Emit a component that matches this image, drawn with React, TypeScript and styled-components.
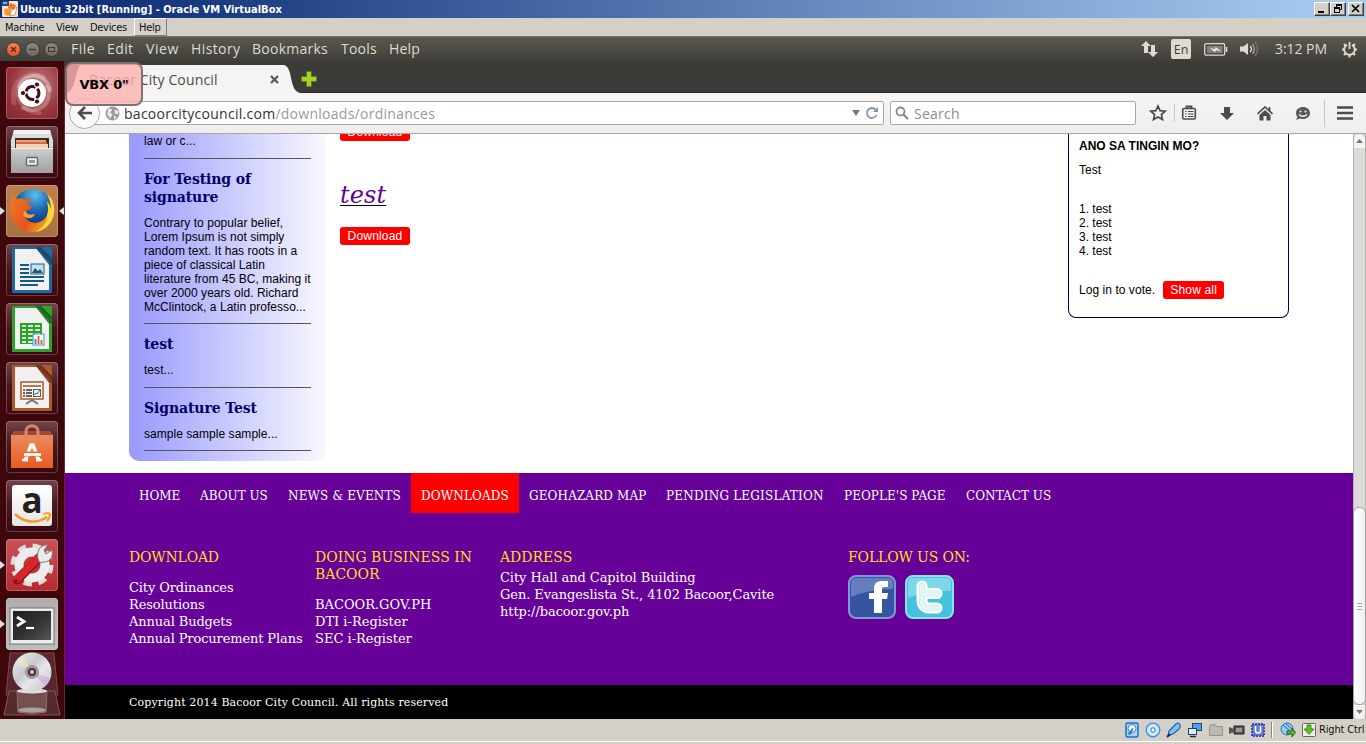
import React from "react";
import styled, { createGlobalStyle, css } from "styled-components";

const GlobalStyle = createGlobalStyle`
  * { box-sizing: border-box; }
  html, body { margin: 0; padding: 0; overflow: hidden; }
  svg { display: block; flex: none; }
`;

const Desktop = styled.div`
  width: 1366px;
  height: 744px;
  display: flex;
  flex-direction: column;
  background: #d4d0c8;
  font-family: "Open Sans", "Noto Sans", sans-serif;
`;

/* ---------- Virtual machine window ---------- */
const TitleBar = styled.header`
  height: 18px;
  display: flex;
  align-items: center;
  padding: 0 2px;
  background: linear-gradient(90deg, #0d2a72 0%, #1a3a80 15%, #a6caf0 97%);
`;
const TitleText = styled.div`
  flex: 1;
  padding-left: 2px;
  color: #fff;
  font: bold 11px/17px "DejaVu Sans Condensed", "DejaVu Sans", sans-serif;
  letter-spacing: 0;
  white-space: nowrap;
`;
const WinButton = styled.div<{ $gap?: boolean }>`
  width: 16px;
  height: 14px;
  margin-left: ${(p) => (p.$gap ? 2 : 0)}px;
  background: #d4d0c8;
  border: 1px solid;
  border-color: #fff #404040 #404040 #fff;
  box-shadow: inset -1px -1px #808080;
`;
const VmMenu = styled.nav`
  height: 18px;
  display: flex;
  align-items: center;
  background: #d4d0c8;
`;
const VmMenuItem = styled.div<{ $w: number; $raised?: boolean }>`
  width: ${(p) => p.$w}px;
  height: 18px;
  padding-left: 5px;
  color: #111;
  font: 11px/20px "DejaVu Sans Condensed", "DejaVu Sans", sans-serif;
  letter-spacing: -0.3px;
  white-space: nowrap;
  ${(p) =>
    p.$raised &&
    css`
      padding-left: 4px;
      border: 1px solid;
      border-color: #fff #808080 #808080 #fff;
      line-height: 18px;
    `}
`;

/* ---------- Ubuntu top panel ---------- */
const Panel = styled.div`
  height: 25px;
  display: flex;
  align-items: center;
  border-top: 1px solid #77756c;
  padding: 0 8px 0 6px;
  background: linear-gradient(#5b5950, #3f3e39);
  color: #dfdbd2;
`;
const WindowDots = styled.div`
  display: flex;
  gap: 4px;
  width: 65px;
`;
const Dot = styled.div<{ $close?: boolean }>`
  width: 15px;
  height: 15px;
  border-radius: 50%;
  border: 1px solid #3a3934;
  background: ${(p) => (p.$close ? "linear-gradient(#f4825e,#e4552a)" : "linear-gradient(#8b8980,#6c6a62)")};
`;
const PanelItem = styled.div<{ $w: number; $ls?: number }>`
  width: ${(p) => p.$w}px;
  font-size: 14px;
  line-height: 22px;
  letter-spacing: ${(p) => p.$ls ?? 0.2}px;
  white-space: nowrap;
`;
const Indicators = styled.div`
  margin-left: auto;
  display: flex;
  align-items: center;
`;
const Lang = styled.div`
  width: 20px;
  height: 20px;
  margin: 0 13px 0 13px;
  border-radius: 2px;
  background: #dfdbd2;
  color: #3f3e39;
  font-size: 12.5px;
  line-height: 21px;
  text-align: center;
`;
const Clock = styled.div`
  width: 53px;
  margin: 0 13px 0 14px;
  font-size: 14px;
  line-height: 22px;
  letter-spacing: -0.05px;
  white-space: nowrap;
`;

/* ---------- Workspace ---------- */
const Workspace = styled.div`
  height: 658px;
  display: flex;
`;
const Launcher = styled.aside`
  width: 65px;
  display: flex;
  flex-direction: column;
  align-items: center;
  gap: 7px;
  padding: 6px 0 0 0;
  border-right: 1px solid #6b2430;
  background: #3e070c;
`;
const Tile = styled.div<{ $bg: string }>`
  position: relative;
  flex: none;
  width: 52px;
  height: 52px;
  border-radius: 4px;
  background: ${(p) => p.$bg};
  box-shadow: inset 0 0 0 1px rgba(255, 255, 255, 0.22);
`;
const Pip = styled.i<{ $right?: boolean }>`
  position: absolute;
  top: 22px;
  ${(p) => (p.$right ? "right: -6px;" : "left: -6px;")}
  border: 4px solid transparent;
  ${(p) => (p.$right ? "border-right: 5px solid #ddd; border-left: 0;" : "border-left: 5px solid #ddd; border-right: 0;")}
`;
const DiscStack = styled.div`
  margin-top: -5px;
`;

/* ---------- Browser ---------- */
const Browser = styled.main`
  width: 1301px;
  display: flex;
  flex-direction: column;
`;
const TabStrip = styled.div`
  position: relative;
  height: 32px;
  display: flex;
  align-items: flex-end;
  background: #3c3b37;
  border-bottom: 1px solid #2b2a27;
`;
const Tab = styled.div`
  width: 203px;
  height: 28px;
  margin: 0 0 -1px;
  display: flex;
  align-items: center;
  padding: 0 5px 0 8px;
  background: #f5f4f2;
  color: #4c4c4c;
  font-size: 14px;
  letter-spacing: 0.14px;
  white-space: nowrap;
  z-index: 1;
`;
const TabClose = styled.svg`
  margin-left: auto;
`;
const TabEdge = styled.svg<{ $left?: boolean }>`
  margin: ${(p) => (p.$left ? "0 -1px -1px 0" : "0 0 -1px -1px")};
  z-index: 1;
`;
const NewTab = styled.svg`
  margin: 0 0 5px 0;
`;
const Badge = styled.div`
  position: absolute;
  z-index: 3;
  left: 0;
  top: 1px;
  width: 78px;
  height: 44px;
  border: 2px solid #82706f;
  border-radius: 8px;
  background: rgba(255, 176, 176, 0.8);
  color: #000;
  font: bold 13px/41px "DejaVu Sans", sans-serif;
  letter-spacing: -0.2px;
  text-align: center;
`;
const NavBar = styled.div`
  height: 41px;
  display: flex;
  align-items: center;
  padding: 0 0 0 4px;
  background: linear-gradient(#f6f5f3, #efeeec);
  border-bottom: 1px solid #a9a7a3;
`;
const Back = styled.div`
  width: 31px;
  height: 31px;
  margin-right: -13px;
  border: 1px solid #aaa;
  border-radius: 50%;
  background: #fafafa;
  display: grid;
  place-items: center;
  z-index: 1;
`;
const UrlField = styled.div`
  width: 797px;
  height: 24px;
  display: flex;
  align-items: center;
  padding: 0 4px 0 17px;
  border: 1px solid #aaa8a5;
  border-radius: 2px;
  background: #fff;
  color: #999;
  font-size: 14px;
  letter-spacing: 0.27px;
  white-space: nowrap;
  & b { font-weight: 400; color: #333; }
  & span { flex: 1; padding-left: 4px; }
`;
const SearchField = styled.div`
  width: 246px;
  height: 24px;
  margin-left: 6px;
  padding-left: 4px;
  display: flex;
  align-items: center;
  gap: 5px;
  border: 1px solid #aaa8a5;
  border-radius: 2px;
  background: #fff;
  color: #8c8c8c;
  font-size: 14px;
  letter-spacing: 0.25px;
`;
const Tools = styled.div`
  flex: 1;
  display: flex;
  align-items: center;
  padding-left: 6px;
`;
const ToolSlot = styled.div<{ $w: number }>`
  width: ${(p) => p.$w}px;
  display: grid;
  place-items: center;
`;
const Divider = styled.i<{ $tall?: boolean }>`
  width: 1px;
  height: ${(p) => (p.$tall ? 27 : 18)}px;
  margin-left: ${(p) => (p.$tall ? -3 : 0)}px;
  background: #c9c7c4;
`;
const Viewport = styled.div`
  height: 585px;
  display: flex;
  background: #fff;
`;
const ScrollTrack = styled.div`
  width: 13px;
  height: 585px;
  display: flex;
  flex-direction: column;
  justify-content: space-between;
  background: #dddbd8;
  border-left: 1px solid #b5b2ae;
  border-right: 1px solid #b5b2ae;
`;
const ScrollCap = styled.div<{ $down?: boolean }>`
  height: 14px;
  display: grid;
  place-items: center;
  background: #f4f3f2;
  border-radius: ${(p) => (p.$down ? "0 0 6px 6px" : "6px 6px 0 0")};
`;
const ScrollThumb = styled.div`
  height: 199px;
  margin: 359px -1px 0;
  display: grid;
  place-items: center;
  border: 1px solid #a5a29e;
  border-radius: 6px;
  background: linear-gradient(90deg, #fff, #f0efed);
`;

/* ---------- Web page ---------- */
const Page = styled.div`
  width: 1288px;
  display: flex;
  flex-direction: column;
`;
const Columns = styled.div`
  height: 339px;
  display: flex;
  padding-left: 64px;
  font: 12px/14px "Liberation Sans", sans-serif;
  color: #000;
`;
const News = styled.section`
  width: 197px;
  height: 327px;
  padding: 0 15px;
  border-radius: 0 0 10px 10px;
  background: linear-gradient(90deg, #9999ff, #f8f8ff);
`;
const Article = styled.article<{ $roomy?: boolean }>`
  width: 167px;
  padding-bottom: ${(p) => (p.$roomy ? 10 : 9)}px;
  border-bottom: 1px solid #555;
  letter-spacing: 0.04px;
  white-space: nowrap;
  & + & { padding-top: 11px; }
`;
const NewsTitle = styled.h3`
  margin: 0 0 10px;
  color: #000066;
  font: bold 14px/18px "DejaVu Serif", serif;
  letter-spacing: -0.1px;
`;
const Listing = styled.section`
  width: 728px;
  margin-left: 14px;
  display: flex;
  flex-direction: column;
  align-items: flex-start;
`;
const RedButton = styled.a<{ $w: number }>`
  display: block;
  width: ${(p) => p.$w}px;
  height: 18px;
  border-radius: 3px;
  background: #f00;
  color: #fff;
  font: 12px/18px "Liberation Sans", sans-serif;
  letter-spacing: 0.18px;
  text-align: center;
`;
const Clipped = styled.div`
  height: 7px;
  overflow: hidden;
  display: flex;
  align-items: flex-end;
`;
const ItemLink = styled.a`
  margin: 38px 0 16px;
  color: #660099;
  font: italic 24px/32px "DejaVu Serif", serif;
  border-bottom: 0;
  letter-spacing: 0.1px;
  text-decoration: underline;
  text-decoration-color: #000;
  text-decoration-thickness: 1px;
  text-underline-offset: 2px;
  text-decoration-skip-ink: none;
`;
const Poll = styled.section`
  width: 221px;
  height: 184px;
  padding: 5px 10px;
  border: 1px solid #000055;
  border-top: 0;
  border-radius: 0 0 8px 8px;
  & p { margin: 10px 0 0; }
  & ol { margin: 25px 0 23px; padding: 0; list-style: none; }
`;
const Vote = styled.div`
  display: flex;
  align-items: center;
  gap: 8px;
  line-height: 18px;
  letter-spacing: 0.05px;
`;
const Footer = styled.footer`
  height: 212px;
  padding-left: 64px;
  background: #660099;
  color: #fff;
  font: 13px/17px "DejaVu Serif", serif;
`;
const FooterNav = styled.nav`
  display: flex;
  height: 40px;
  margin-bottom: 36px;
`;
const FooterLink = styled.a<{ $w: number; $ls: number; $active?: boolean }>`
  width: ${(p) => p.$w}px;
  padding-left: 10px;
  font-size: 12px;
  line-height: 46px;
  letter-spacing: ${(p) => p.$ls}px;
  white-space: nowrap;
  background: ${(p) => (p.$active ? "#f00" : "none")};
`;
const FooterCols = styled.div`
  display: flex;
`;
const FooterCol = styled.div<{ $w: number; $ls?: number }>`
  width: ${(p) => p.$w}px;
  letter-spacing: ${(p) => p.$ls ?? 0}px;
  & div { white-space: nowrap; }
`;
const FooterTitle = styled.h4<{ $gap: number; $ls?: number }>`
  margin: 0 0 ${(p) => p.$gap}px;
  color: #ffdd1c;
  font: 14px/17px "DejaVu Serif", serif;
  letter-spacing: ${(p) => p.$ls ?? 0}px;
`;
const Social = styled.div`
  display: flex;
  gap: 9px;
`;
const Copyright = styled.div`
  height: 34px;
  padding-left: 64px;
  background: #000;
  color: #fff;
  font: 11px/35px "DejaVu Serif", serif;
  letter-spacing: 0.12px;
`;

/* ---------- Status bar ---------- */
const StatusBar = styled.div`
  height: 25px;
  display: flex;
  justify-content: flex-end;
  align-items: center;
  gap: 5px;
  padding: 0 1px 3px 0;
  background: linear-gradient(#d4d0c8 22px, #fff 22px, #fff 23px, #d4d0c8 23px);
`;
const HostKey = styled.span`
  width: 46px;
  margin-left: -3px;
  color: #111;
  font: 11px/16px "DejaVu Sans Condensed", "DejaVu Sans", sans-serif;
  letter-spacing: -0.15px;
  white-space: nowrap;
`;
const StatusDivider = styled.i`
  width: 2px;
  height: 16px;
  margin: 0 2px 0 0;
  border-left: 1px solid #888;
  border-right: 1px solid #fff;
`;

/* ---------- Launcher drawings ---------- */
const glass = "linear-gradient(#704448, #4a1a20 45%, #38080e)";

const Dash = () => (
  <svg width="52" height="52" viewBox="0 0 52 52">
    <g fill="none" stroke="#fff" strokeLinecap="round">
      <path d="M13 20C18 5 40 4 44 23" opacity=".35" strokeWidth="4" />
      <path d="M8 36C4 14 22 3 37 10" opacity=".15" strokeWidth="5" />
      <path d="M41 20C48 36 32 48 17 41" opacity=".25" strokeWidth="4" />
      <path d="M15 18C6 32 20 46 34 46" opacity=".18" strokeWidth="4" />
    </g>
    <circle cx="26" cy="26" r="14" fill="#fff" />
    <circle cx="26.500" cy="26" r="6.500" fill="none" stroke="#431015" strokeWidth="3" strokeDasharray="11.600 2" strokeDashoffset="-8" />
    <g fill="#431015" stroke="#fff" strokeWidth="1">
      <circle cx="17" cy="26" r="2.600" />
      <circle cx="31" cy="17.500" r="2.600" />
      <circle cx="31" cy="34.500" r="2.600" />
    </g>
  </svg>
);
const Files = () => (
  <svg width="52" height="52" viewBox="0 0 52 52">
    <defs>
      <linearGradient id="cab" x2="0" y2="1"><stop stopColor="#d0d0d0" /><stop offset="1" stopColor="#a0a0a0" /></linearGradient>
    </defs>
    <path d="M8 4H44L47 14V24H5V14Z" fill="#dcdcdc" />
    <path d="M8 4H44L45 8H7Z" fill="#f4f4f4" />
    <path d="M9 12H43V25H9Z" fill="#3b2a24" />
    <path d="M10 14H40V17H10Z" fill="#e9a079" />
    <path d="M10 16H41V19H10Z" fill="#d66a3c" />
    <path d="M10 18H42V22H10Z" fill="#f4d3b4" />
    <path d="M5 21H9V22H43V21H47V47H5Z" fill="url(#cab)" />
    <path d="M5 22H47V23H5Z" fill="#eee" />
    <rect x="20.500" y="31.500" width="11" height="8" rx="1" fill="#eee" stroke="#666" strokeWidth="1.300" />
    <rect x="23" y="34" width="6" height="3" fill="#999" />
  </svg>
);
const Firefox = () => (
  <svg width="52" height="52" viewBox="0 0 52 52">
    <defs>
      <radialGradient id="globe" cx=".55" cy=".15" r=".8"><stop stopColor="#5fbdeb" /><stop offset=".5" stopColor="#1a66ad" /><stop offset="1" stopColor="#0c2f74" /></radialGradient>
      <linearGradient id="fox" x1="0" y1="0" x2="1" y2=".5"><stop stopColor="#ec7f2a" /><stop offset=".6" stopColor="#e6531c" /><stop offset="1" stopColor="#f5a41f" /></linearGradient>
    </defs>
    <circle cx="27" cy="24" r="20" fill="url(#globe)" />
    <path d="M7 9C8 11 10 13 11 14C14 13 17 13 19 15C20 14 23 13 26 13C23 15 22 18 22 20L26 22C26 24 22 25 20 26C19 29 23 31 29 29C27 33 22 34 19 32C24 41 37 39 41 30C43 26 42 20 41 16C44 20 44 22 45 24C45 18 43 13 41 9C49 15 50 26 46 35C41 45 30 49 20 46C8 42 3 32 4 22C4 17 5 13 7 9Z" fill="url(#fox)" />
    <path d="M41 9C49 15 50 26 46 35C42 43 35 46 30 47C38 42 42 36 41 30C43 26 42 20 41 16C44 20 44 22 45 24C45 18 43 13 41 9Z" fill="#fcd53a" />
    <path d="M20 26C17 27 16 30 19 32C24 34 27 33 29 29C24 31 20 29 20 26Z" fill="#f8a13a" />
  </svg>
);
const OfficeSheet = ({ color, dark, children }: { color: string; dark: string; children: React.ReactNode }) => (
  <svg width="52" height="52" viewBox="0 0 52 52">
    <path d="M6 3H34L46 15V49H6Z" fill={color} />
    <path d="M33 3H46V17Z" fill={dark} />
    <path d="M9 5H31L43 18V46H9Z" fill="#f1f1f1" />
    <path d="M29 3H46V20L43 21Z" fill={dark} opacity=".8" />
    <path d="M35 3H46V14Z" fill={color} />
    {children}
  </svg>
);
const Writer = () => (
  <OfficeSheet color="#1f6a9c" dark="#174a6b">
    <path d="M14 21H23M14 25H23M14 29H23M14 33H38M14 37H38M14 41H32" stroke="#155a86" strokeWidth="2" />
    <rect x="25" y="20" width="13" height="10" fill="#bfe2f4" stroke="#155a86" />
    <path d="M26 29L29 24L32 27L34 25L37 29Z" fill="#2b566b" />
  </OfficeSheet>
);
const Calc = () => (
  <OfficeSheet color="#2ea32b" dark="#15661b">
    <rect x="14" y="20" width="22" height="21" fill="#2ba02b" />
    <path d="M16 23H20M22 23H27M29 23H34M16 27H20M22 27H27M29 27H34M16 31H20M22 31H27M29 31H34M16 35H20M22 35H27M29 35H34M16 39H20M22 39H27" stroke="#d9f7d3" strokeWidth="2" />
    <rect x="27" y="31" width="11" height="11" fill="#fff" stroke="#4b8ed0" />
    <path d="M29.500 41V36" stroke="#4b8ed0" strokeWidth="2" /><path d="M32.500 41V33" stroke="#e8622c" strokeWidth="2" /><path d="M35.500 41V37" stroke="#d3722a" strokeWidth="2" />
  </OfficeSheet>
);
const Impress = () => (
  <OfficeSheet color="#b2592c" dark="#6e3015">
    <rect x="15" y="20" width="22" height="17" fill="#fff" stroke="#b55225" strokeWidth="1.500" />
    <path d="M17 24H35" stroke="#c4704a" strokeWidth="2" />
    <path d="M17 28H19M17 31H19M17 34H19M20 28H26M20 31H26M20 34H26" stroke="#4a241a" strokeWidth="1.600" />
    <rect x="27.500" y="27.500" width="7" height="7" fill="#eef" stroke="#386f50" />
    <path d="M28.500 33L30 31L31 32L34 28" stroke="#386f50" fill="none" />
    <path d="M20 42L26 38L32 42" stroke="#777" strokeWidth="2" fill="none" />
  </OfficeSheet>
);
const Software = () => (
  <svg width="52" height="52" viewBox="0 0 52 52">
    <defs><linearGradient id="bag" x2="0" y2="1"><stop stopColor="#ec8a5d" /><stop offset="1" stopColor="#ea5a1e" /></linearGradient></defs>
    <path d="M5 14L8 10H44L47 14Z" fill="#9c4c35" />
    <path d="M5 14H47V47H5Z" fill="url(#bag)" />
    <path d="M20 17V10C20 3 32 3 32 10V17" fill="none" stroke="#e2856c" strokeWidth="3" />
    <circle cx="20" cy="17" r="2" fill="#e2856c" /><circle cx="32" cy="17" r="2" fill="#e2856c" />
    <path d="M19 40L25 24H27L33 40" fill="none" stroke="#fff" strokeWidth="3.600" />
    <path d="M17 33H35" stroke="#ec6a33" strokeWidth="5" /><path d="M18 33.500H35" stroke="#fff" strokeWidth="2.600" />
    <path d="M16 39H22M30 39H36" stroke="#fff" strokeWidth="2.500" />
  </svg>
);
const AmazonCard = styled.div`
  position: relative;
  width: 40px;
  height: 41px;
  margin: 5px 6px;
  display: inline-block;
  border-radius: 3px;
  background: linear-gradient(#fff, #e6e6e6);
  color: #222;
  font: bold 35px/30px "Open Sans", sans-serif;
  text-align: center;
  & svg { position: absolute; left: 0; top: 26px; }
`;
const Amazon = () => (
  <AmazonCard>
    a
    <svg width="40" height="14" viewBox="0 0 40 14">
      <path d="M3 3C13 13 27 12 35 6" fill="none" stroke="#f79a1c" strokeWidth="2.500" />
      <path d="M31 3C34 2 37 2 38 3C38 5 37 8 35 10" fill="none" stroke="#f79a1c" strokeWidth="1.800" />
    </svg>
  </AmazonCard>
);
const Settings = () => (
  <svg width="52" height="52" viewBox="0 0 52 52">
    <circle cx="26" cy="26" r="18.500" fill="none" stroke="#dedede" strokeWidth="6" strokeDasharray="8 6.530" />
    <circle cx="26" cy="26" r="13" fill="none" stroke="#ededed" strokeWidth="9" />
    <circle cx="26" cy="26" r="8" fill="#b83a3c" />
    <path d="M11 41L36 16" stroke="#8d1218" strokeWidth="9" strokeLinecap="round" />
    <path d="M11 40L33 18" stroke="#d5262c" strokeWidth="7.500" strokeLinecap="round" />
    <path d="M32 20C30 12 35 5 42 6L38 11L40 15L46 11C48 18 43 24 36 23L34 24Z" fill="#ececec" stroke="#777" />
    <circle cx="10" cy="42" r="1.500" fill="#6d0c10" />
  </svg>
);
const Terminal = () => (
  <svg width="52" height="52" viewBox="0 0 52 52">
    <defs><linearGradient id="scr" x1="0" x2="1" y2="1"><stop stopColor="#202020" /><stop offset=".5" stopColor="#303030" /><stop offset="1" stopColor="#555" /></linearGradient></defs>
    <rect x="4" y="10" width="44" height="36" fill="#ececec" stroke="#777" />
    <rect x="7" y="13" width="38" height="29" fill="url(#scr)" />
    <path d="M11 19L18 23.500L11 28" fill="none" stroke="#fff" strokeWidth="2.800" />
    <path d="M20 30H28" stroke="#fff" strokeWidth="2.200" />
  </svg>
);
const Disc = () => (
  <svg width="58" height="66" viewBox="0 0 58 66">
    <defs><linearGradient id="cd" x2="1" y2="1"><stop stopColor="#f2f2f2" /><stop offset=".4" stopColor="#c7c9cf" /><stop offset=".6" stopColor="#e9e4ea" /><stop offset="1" stopColor="#bac4c2" /></linearGradient></defs>
    <path d="M7 1H51L55 43H3Z" fill="#5a262b" stroke="#7a484c" />
    <path d="M6 39H52L57 63H1Z" fill="#552a2e" stroke="#7d575a" />
    <path d="M14 39H44L43 60Q29 63 15 60Z" fill="#74504f" stroke="#8f7073" />
    <ellipse cx="29" cy="58" rx="14" ry="2.500" fill="#aaa4a4" />
    <ellipse cx="29" cy="39" rx="15" ry="2.500" fill="#ddd" />
    <circle cx="29" cy="20" r="19.500" fill="url(#cd)" />
    <path d="M29 20L14 11A18 18 0 0 1 20 4Z" fill="#f6efb0" opacity=".5" />
    <path d="M29 20L42 34A18 18 0 0 0 47 26Z" fill="#c9a3d8" opacity=".5" />
    <circle cx="29" cy="20" r="7" fill="#999" /><circle cx="29" cy="20" r="4" fill="#542d30" />
    <circle cx="29" cy="20" r="2" fill="#ccc" />
  </svg>
);

type LauncherApp = { bg: string; icon: React.ReactNode; left?: boolean; right?: boolean };
const apps: LauncherApp[] = [
  { bg: "radial-gradient(circle at 60% 35%, #c08084, #98353b 60%, #84252b)", icon: <Dash /> },
  { bg: glass, icon: <Files /> },
  { bg: "linear-gradient(#bb8150, #a86f42)", icon: <Firefox />, left: true, right: true },
  { bg: glass, icon: <Writer /> },
  { bg: glass, icon: <Calc /> },
  { bg: glass, icon: <Impress /> },
  { bg: glass, icon: <Software /> },
  { bg: glass, icon: <Amazon /> },
  { bg: "linear-gradient(#c65458, #b52a30)", icon: <Settings />, left: true },
  { bg: "linear-gradient(#b0adac, #bdbbb9)", icon: <Terminal />, left: true },
];

type NavLink = { label: string; w: number; ls: number };
const footerLinks: NavLink[] = [
  { label: "HOME", w: 61, ls: 0 },
  { label: "ABOUT US", w: 88, ls: 0 },
  { label: "NEWS & EVENTS", w: 133, ls: 0.15 },
  { label: "DOWNLOADS", w: 108, ls: 0.15 },
  { label: "GEOHAZARD MAP", w: 137, ls: 0.12 },
  { label: "PENDING LEGISLATION", w: 178, ls: 0.2 },
  { label: "PEOPLE'S PAGE", w: 122, ls: 0.06 },
  { label: "CONTACT US", w: 105, ls: 0.04 },
];

export default function App() {
  return (
    <Desktop>
      <GlobalStyle />
      <TitleBar>
        <svg width="16" height="16" viewBox="0 0 16 16">
          <rect width="16" height="16" rx="1" fill="#f6e3c8" />
          <path d="M0 0H7V5H0Z" fill="#2c4a80" /><path d="M1 2H5" stroke="#fff" />
          <path d="M8 2L14 4L12 9L6 7Z" fill="#e27a2a" /><path d="M2 8L9 7L8 15L3 14Z" fill="#ef9a35" /><path d="M9 10L15 6L13 14L8 15Z" fill="#fff" stroke="#d9682a" strokeWidth=".7" />
        </svg>
        <TitleText>Ubuntu 32bit [Running] - Oracle VM VirtualBox</TitleText>
        <WinButton><svg width="14" height="12"><path d="M3 9H9" stroke="#000" strokeWidth="2" /></svg></WinButton>
        <WinButton>
          <svg width="14" height="12" fill="none" stroke="#000"><path d="M5.500 4V1.500H10.500V6.500H9" /><path d="M5 2H11" strokeWidth="2" /><rect x="3.500" y="4.500" width="5" height="5" /><path d="M3 5H9" strokeWidth="2" /></svg>
        </WinButton>
        <WinButton $gap><svg width="14" height="12"><path d="M3 2L10 9M10 2L3 9" stroke="#000" strokeWidth="1.700" /></svg></WinButton>
      </TitleBar>
      <VmMenu>
        <VmMenuItem $w={51}>Machine</VmMenuItem>
        <VmMenuItem $w={34}>View</VmMenuItem>
        <VmMenuItem $w={49}>Devices</VmMenuItem>
        <VmMenuItem $w={33} $raised>Help</VmMenuItem>
      </VmMenu>
      <Panel>
        <WindowDots>
          <Dot $close><svg width="13" height="13"><path d="M4 4L9 9M9 4L4 9" stroke="#5b2312" strokeWidth="1.300" /></svg></Dot>
          <Dot><svg width="13" height="13"><path d="M3 6.500H10" stroke="#3a3934" strokeWidth="1.300" /></svg></Dot>
          <Dot><svg width="13" height="13"><rect x="3.500" y="4.500" width="6" height="4" fill="none" stroke="#3a3934" /></svg></Dot>
        </WindowDots>
        <PanelItem $w={36} $ls={0.5}>File</PanelItem>
        <PanelItem $w={39} $ls={0.4}>Edit</PanelItem>
        <PanelItem $w={45} $ls={0.6}>View</PanelItem>
        <PanelItem $w={61} $ls={0.4}>History</PanelItem>
        <PanelItem $w={89} $ls={0.25}>Bookmarks</PanelItem>
        <PanelItem $w={48}>Tools</PanelItem>
        <PanelItem $w={40}>Help</PanelItem>
        <Indicators>
          <svg width="17" height="18" viewBox="0 0 17 18"><path d="M5 1L10 6H7V13H3V6H0ZM12 17L7 12H10V5H14V12H17Z" fill="#dfdbd2" /></svg>
          <Lang>En</Lang>
          <svg width="24" height="13" viewBox="0 0 24 13" fill="none" stroke="#dfdbd2"><rect x=".7" y=".7" width="20" height="11.500" rx="1.500" strokeWidth="1.300" /><path d="M22.500 4V9" strokeWidth="1.600" /><rect x="3" y="3" width="15.500" height="7" fill="#85837c" stroke="none" /><path d="M6 5L11 6.300L11.500 4L17 8.500L12 7L11 9Z" fill="#f4f2ec" stroke="none" /></svg>
          <svg width="33" height="16" viewBox="0 0 33 16" fill="none"><path d="M20 2V14L15.500 10.500H12V5.500H15.500Z" fill="#dfdbd2" /><path d="M22 5Q25 8 22 11" stroke="#dfdbd2" strokeWidth="1.300" /><path d="M24.500 3Q28 8 24.500 13" stroke="#aaa69e" strokeWidth="1.300" /><path d="M27 1Q32 8 27 15" stroke="#77756d" strokeWidth="1.300" /></svg>
          <Clock>3:12 PM</Clock>
          <svg width="17" height="17" viewBox="0 0 17 17" fill="none" stroke="#dfdbd2"><path d="M6 3.800A5.300 5.300 0 1 0 11 3.800" strokeWidth="1.900" /><path d="M8.500 1V8" strokeWidth="1.800" /><path d="M1 8.500H3M14 8.500H16M8.500 14V16.500M3 3L4.500 4.500M14 3L12.500 4.500M3 14L4.500 12.500M14 14L12.500 12.500" strokeWidth="2" /></svg>
        </Indicators>
      </Panel>
      <Workspace>
        <Launcher>
          {apps.map((app, i) => (
            <Tile key={i} $bg={app.bg}>
              {app.icon}
              {app.left && <Pip />}
              {app.right && <Pip $right />}
            </Tile>
          ))}
          <DiscStack><Disc /></DiscStack>
        </Launcher>
        <Browser>
          <TabStrip>
            <Badge>VBX 0"</Badge>
            <TabEdge $left width="17" height="28" viewBox="0 0 18 28" preserveAspectRatio="none"><path d="M18 0C9 1 14 27 0 28H18Z" fill="#f5f4f2" /></TabEdge>
            <Tab>
              Bacoor City Council
              <TabClose width="9" height="9"><path d="M1 1L8 8M8 1L1 8" stroke="#555" strokeWidth="2.200" /></TabClose>
            </Tab>
            <TabEdge width="18" height="28" viewBox="0 0 18 28"><path d="M0 0C11 0 5 27 18 28H0Z" fill="#f5f4f2" /></TabEdge>
            <NewTab width="16" height="16" viewBox="0 0 16 16"><path d="M5.500.5H10.500V5.500H15.500V10.500H10.500V15.500H5.500V10.500H.5V5.500H5.500Z" fill="#a5d02d" stroke="#5a7d0d" /></NewTab>
          </TabStrip>
          <NavBar>
            <Back><svg width="16" height="16" viewBox="0 0 16 16"><path d="M8 2L2 8L8 14M2.500 8H15" fill="none" stroke="#4c4c4c" strokeWidth="2.600" /></svg></Back>
            <UrlField>
              <svg width="15" height="15" viewBox="0 0 14 14"><circle cx="7" cy="7" r="6.500" fill="#999" /><path d="M3 2L7 3L5 6L7 8L5 12L2 8ZM9 3L13 5L12 8L9 7ZM8 9L11 10L9 13Z" fill="#e8e8e8" /></svg>
              <span><b>bacoorcitycouncil.com</b>/downloads/ordinances</span>
              <svg width="8" height="6"><path d="M0 0H8L4 6Z" fill="#777" /></svg>
              <svg width="19" height="14" viewBox="0 0 19 14"><path d="M15.500 3.500A5 5 0 1 0 16.500 9" fill="none" stroke="#8494a6" strokeWidth="1.800" /><path d="M18 1V6H13Z" fill="#8494a6" /></svg>
            </UrlField>
            <SearchField>
              <svg width="14" height="14"><circle cx="5.500" cy="5.500" r="4" fill="none" stroke="#888" strokeWidth="1.800" /><path d="M8.500 8.500L13 13" stroke="#888" strokeWidth="2.200" /></svg>
              Search
            </SearchField>
            <Tools>
              <ToolSlot $w={32}><svg width="18" height="18" viewBox="0 0 18 18"><path d="M9 2L11.100 6.600L16.200 7.100L12.400 10.500L13.500 15.500L9 12.900L4.500 15.500L5.600 10.500L1.800 7.100L6.900 6.600Z" fill="none" stroke="#4c4c4c" strokeWidth="1.700" /></svg></ToolSlot>
              <Divider />
              <ToolSlot $w={28}><svg width="16" height="16" viewBox="0 0 16 16"><path d="M5.500 3V1.500H10.500V3" fill="none" stroke="#4c4c4c" strokeWidth="1.800" /><rect x="1.700" y="3.500" width="12.600" height="10.500" rx="1.300" fill="none" stroke="#4c4c4c" strokeWidth="1.600" /><path d="M4 6.500H5.500M7 6.500H12.500M4 9H5.500M7 9H12.500M4 11.500H5.500M7 11.500H12.500" stroke="#4c4c4c" strokeWidth="1.100" /></svg></ToolSlot>
              <ToolSlot $w={48}><svg width="14" height="15" viewBox="0 0 14 15"><path d="M4 1H10V7H14L7 14L0 7H4Z" fill="#4c4c4c" /></svg></ToolSlot>
              <ToolSlot $w={28}><svg width="16" height="15" viewBox="0 0 16 15"><path d="M.5 8L8 1L15.500 8M12.500 1V5" fill="none" stroke="#4c4c4c" strokeWidth="1.700" /><path d="M8 4L13.500 9V14.500H9.500V10H6.500V14.500H2.500V9Z" fill="#4c4c4c" /></svg></ToolSlot>
              <ToolSlot $w={48}><svg width="14" height="15" viewBox="12 0 14 15"><path d="M19 1C23 1 26 3.500 26 7S23 13 19 13C18 13 17 13 16 12.500L12 14L13.500 11C12.500 10 12 8.500 12 7C12 3.500 15 1 19 1Z" fill="#5a5a5a" /><circle cx="16.500" cy="5.500" r="1" fill="#fff" /><circle cx="21.500" cy="5.500" r="1" fill="#fff" /><path d="M15 8.500Q19 12 23 8.500" fill="none" stroke="#fff" strokeWidth="1.300" /></svg></ToolSlot>
              <Divider $tall />
              <ToolSlot $w={40}><svg width="16" height="14" viewBox="0 0 16 14"><path d="M0 1.500H16M0 7H16M0 12.500H16" stroke="#4c4c4c" strokeWidth="2.700" /></svg></ToolSlot>
            </Tools>
          </NavBar>
          <Viewport>
            <Page>
              <Columns>
                <News>
                  <Article $roomy>law or c...</Article>
                  <Article>
                    <NewsTitle>For Testing of<br />signature</NewsTitle>
                    Contrary to popular belief,<br />Lorem Ipsum is not simply<br />random text. It has roots in a<br />piece of classical Latin<br />literature from 45 BC, making it<br />over 2000 years old. Richard<br />McClintock, a Latin professo...
                  </Article>
                  <Article $roomy><NewsTitle>test</NewsTitle>test...</Article>
                  <Article><NewsTitle>Signature Test</NewsTitle>sample sample sample...</Article>
                </News>
                <Listing>
                  <Clipped><RedButton $w={70}>Download</RedButton></Clipped>
                  <ItemLink>test</ItemLink>
                  <RedButton $w={70}>Download</RedButton>
                </Listing>
                <Poll>
                  <b>ANO SA TINGIN MO?</b>
                  <p>Test</p>
                  <ol><li>1. test</li><li>2. test</li><li>3. test</li><li>4. test</li></ol>
                  <Vote>Log in to vote. <RedButton $w={61}>Show all</RedButton></Vote>
                </Poll>
              </Columns>
              <Footer>
                <FooterNav>
                  {footerLinks.map((link) => (
                    <FooterLink key={link.label} $w={link.w} $ls={link.ls} $active={link.label === "DOWNLOADS"}>{link.label}</FooterLink>
                  ))}
                </FooterNav>
                <FooterCols>
                  <FooterCol $w={186} $ls={-0.12}>
                    <FooterTitle $gap={13} $ls={-0.2}>DOWNLOAD</FooterTitle>
                    <div>City Ordinances</div><div>Resolutions</div><div>Annual Budgets</div><div>Annual Procurement Plans</div>
                  </FooterCol>
                  <FooterCol $w={185}>
                    <FooterTitle $gap={13}>DOING BUSINESS IN<br />BACOOR</FooterTitle>
                    <div>BACOOR.GOV.PH</div><div>DTI i-Register</div><div>SEC i-Register</div>
                  </FooterCol>
                  <FooterCol $w={348} $ls={-0.08}>
                    <FooterTitle $gap={3}>ADDRESS</FooterTitle>
                    <div>City Hall and Capitol Building</div><div>Gen. Evangeslista St., 4102 Bacoor,Cavite</div><div>http://bacoor.gov.ph</div>
                  </FooterCol>
                  <FooterCol $w={200}>
                    <FooterTitle $gap={9} $ls={-0.15}>FOLLOW US ON:</FooterTitle>
                    <Social>
                      <svg width="48" height="44" viewBox="0 0 48 44">
                        <rect x="1" y="1" width="46" height="42" rx="7" fill="#3655a0" stroke="#7f98d8" strokeWidth="2" />
                        <path d="M3 8Q3 3 8 3H40Q45 3 45 8V14Q22 14 3 22Z" fill="#7991cb" opacity=".7" />
                        <path d="M26 38V24H21V18H26V14C26 8 29 6 34 6H40V12H36C34 12 34 13 34 15V18H40L39 24H34V38Z" fill="#fff" />
                      </svg>
                      <svg width="49" height="44" viewBox="0 0 49 44">
                        <rect x="1" y="1" width="47" height="42" rx="7" fill="#45c1dd" stroke="#8ce2f2" strokeWidth="2" />
                        <path d="M3 8Q3 3 8 3H41Q46 3 46 8V16Q22 15 3 23Z" fill="#a5e6f2" opacity=".6" />
                        <path d="M17 11V25Q17 33 25 33H32M17 18.500H32" fill="none" stroke="#fff" strokeWidth="11" strokeLinecap="round" />
                        <path d="M17 11V25Q17 33 25 33H32M17 18.500H32" fill="none" stroke="#5fcbe2" strokeWidth="5.500" strokeLinecap="round" />
                        <path d="M17 11V25Q17 33 25 33H32M17 18.500H32" fill="none" stroke="#fff" strokeWidth="5.500" strokeLinecap="round" opacity=".8" />
                      </svg>
                    </Social>
                  </FooterCol>
                </FooterCols>
              </Footer>
              <Copyright>Copyright 2014 Bacoor City Council. All rights reserved</Copyright>
            </Page>
            <ScrollTrack>
              <ScrollCap><svg width="7" height="4"><path d="M0 4L3.500 0L7 4Z" fill="#777" /></svg></ScrollCap>
              <ScrollThumb><svg width="5" height="8"><path d="M0 1.500H5M0 4.500H5M0 7.500H5" stroke="#aaa" /></svg></ScrollThumb>
              <ScrollCap $down><svg width="7" height="4"><path d="M0 0L3.500 4L7 0Z" fill="#777" /></svg></ScrollCap>
            </ScrollTrack>
          </Viewport>
        </Browser>
      </Workspace>
      <StatusBar>
        <svg width="16" height="16"><rect x="2" y="1" width="12" height="14" rx="1.500" fill="#a9d5fb" stroke="#1372d0" strokeWidth="1.500" /><circle cx="8" cy="6.500" r="4" fill="#fff" stroke="#2d7fd0" /><path d="M9 6L4 12H7Z" fill="#2d7fd0" stroke="#2d7fd0" /></svg>
        <svg width="16" height="16"><circle cx="8" cy="8" r="6.800" fill="#cde8fb" stroke="#3b8fdc" strokeWidth="1.300" /><circle cx="8" cy="8" r="2.200" fill="#fff" stroke="#1c68bd" /></svg>
        <svg width="16" height="16"><path d="M2 14L3 9L10 2Q13 0 14 3Q15 5 13 7L7 12Z" fill="#7fc0f5" stroke="#1764b5" strokeWidth="1.200" /><path d="M1 15L4 12" stroke="#223" strokeWidth="2" /></svg>
        <svg width="16" height="16"><rect x="5.500" y="1.500" width="9" height="7" fill="#4da0ee" stroke="#1b4375" /><rect x="1.500" y="6.500" width="8" height="6" fill="#d9efff" stroke="#1b4375" /><path d="M3 14.500H9" stroke="#223" strokeWidth="1.500" /></svg>
        <svg width="16" height="16"><path d="M1.500 13.500V4.500L3 2.500H7L8.500 4.500H14.500V13.500Z" fill="#bbb8b2" stroke="#96938d" /></svg>
        <svg width="16" height="16"><path d="M5 4H15V12H5Z" fill="#555" stroke="#222" /><path d="M0 5L5 7V10L0 12Z" fill="#555" /><path d="M7 6H13V10H7Z" fill="#999" /></svg>
        <svg width="16" height="16"><rect x="2" y="2" width="12" height="12" fill="#647ed7" stroke="#3c50b1" strokeWidth="2" strokeDasharray="2 1" /><path d="M5.500 4V9Q5.500 11 8 11T10.500 9V4" fill="none" stroke="#fff" strokeWidth="1.500" /></svg>
        <StatusDivider />
        <svg width="16" height="16"><circle cx="7" cy="7" r="6" fill="#92cef3" stroke="#246bae" /><path d="M3 3L10 9M6 2L12 7" stroke="#28609a" /><path d="M7 9H12V6L15.500 10.500L12 15V12H7Z" fill="#55b82a" stroke="#286713" /></svg>
        <svg width="16" height="16"><rect x="1.500" y="1.500" width="13" height="13" rx="1" fill="#eee" stroke="#666" /><path d="M6 3H10V7H13L8 12.500L3 7H6Z" fill="#58c414" stroke="#2e7610" strokeWidth=".8" /></svg>
        <HostKey>Right Ctrl</HostKey>
      </StatusBar>
    </Desktop>
  );
}
